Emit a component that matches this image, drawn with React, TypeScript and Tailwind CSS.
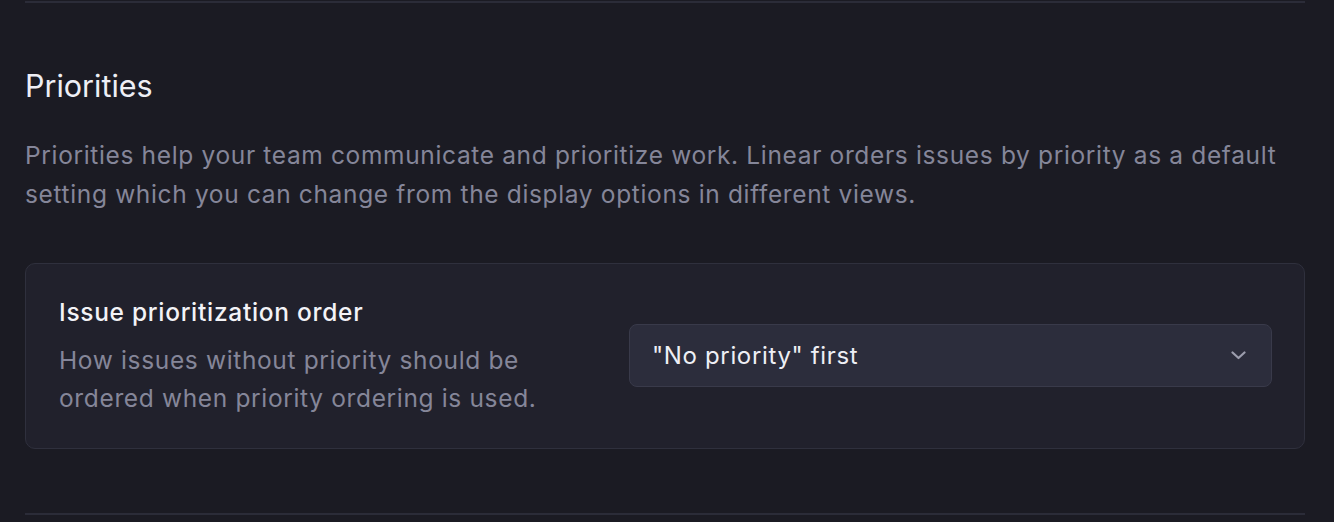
import React from 'react';

const App: React.FC = () => {
    return (
        <div className="min-h-[522px] w-full bg-[#1b1b23] font-['Inter',sans-serif] antialiased">
            <div className="ml-[25px] mr-[29px] h-[522px] flex flex-col">
                <div className="h-[2px] bg-[#2b2c38] mt-[1px]"></div>

                <h2 className="mt-[64px] text-[30.5px] leading-[38px] text-[#eeeff5] font-normal">Priorities</h2>

                <p className="mt-[31px] text-[24.5px] leading-[39px] text-[#858699] tracking-[0.65px]">
                    Priorities help your team communicate and prioritize work. Linear orders issues by priority as a default setting which you can change from the display options in different views.
                </p>

                <div className="mt-[49px] rounded-[10px] border border-[#2f303d] bg-[#21212c] pl-[33px] pr-[32px] pt-[30px] pb-[31px] flex items-center justify-between">
                    <div className="w-[510px]">
                        <div className="text-[24.5px] leading-[36px] font-medium text-[#f3f3f7] tracking-[0.7px]">Issue prioritization order</div>
                        <div className="mt-[11px] text-[24.5px] leading-[38px] text-[#858699] tracking-[0.65px]">
                            How issues without priority should be ordered when priority ordering is used.
                        </div>
                    </div>
                    <div className="w-[643px] h-[63px] rounded-[8px] border-[1.5px] border-[#393a4a] bg-[#2c2d3c] flex items-center justify-between pl-[22px] pr-[25px]">
                        <span className="text-[24px] text-[#eeeff5] tracking-[0.65px]">"No priority" first</span>
                        <svg width="15" height="9" viewBox="0 0 15 9" fill="none">
                            <path d="M1.5 1.5 7.5 7 13.5 1.5" stroke="#9c9dad" strokeWidth="2.2" strokeLinecap="round" strokeLinejoin="round" />
                        </svg>
                    </div>
                </div>

                <div className="mt-[64px] h-[2px] bg-[#2b2c38]"></div>
            </div>
        </div>
    );
};

export default App;
